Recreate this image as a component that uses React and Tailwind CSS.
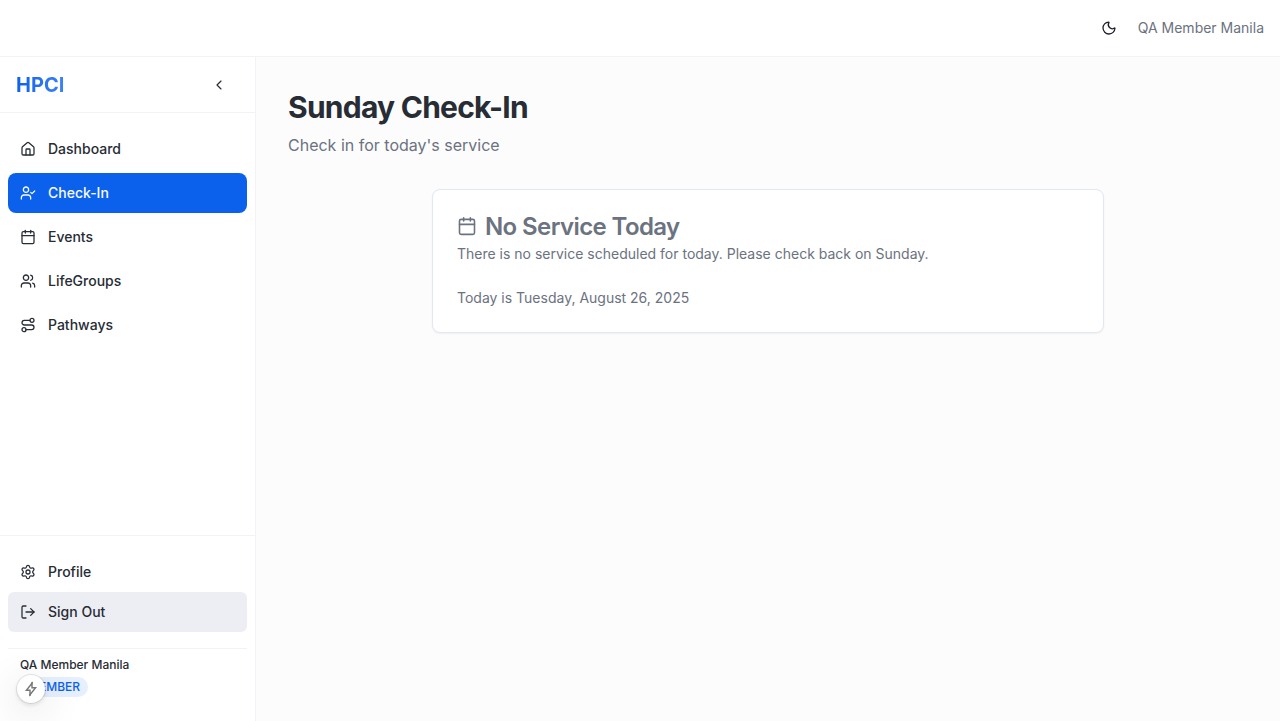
import React from "react";
import { House, UserCheck, Calendar, Users, Route, Settings, LogOut, ChevronLeft, Moon } from "lucide-react";

const navItems = [
  { label: "Dashboard", icon: House },
  { label: "Check-In", icon: UserCheck, active: true },
  { label: "Events", icon: Calendar },
  { label: "LifeGroups", icon: Users },
  { label: "Pathways", icon: Route },
];

function NavItem({ label, icon: Icon, active }) {
  return (
    <a
      className={
        "flex h-10 items-center gap-3 rounded-lg px-3 text-sm font-medium " +
        (active ? "bg-[#0b61eb] text-[#f8fafc]" : "text-[#272c35]")
      }
    >
      <Icon size={16} strokeWidth={1.9} />
      <span>{label}</span>
    </a>
  );
}

function Sidebar() {
  return (
    <aside className="flex w-64 shrink-0 flex-col border-r border-[#f1f3f7] bg-white">
      <div className="flex h-14 shrink-0 items-center justify-between border-b border-[#f1f3f7] pl-4 pr-7">
        <span className="bg-linear-to-r from-[#0b61eb] to-[#3b82f6] bg-clip-text text-xl font-bold text-transparent">
          HPCI
        </span>
        <button className="flex h-8 w-4 items-center justify-center text-[#272c35]">
          <ChevronLeft size={16} strokeWidth={1.75} />
        </button>
      </div>
      <nav className="flex flex-1 flex-col gap-1 px-2 py-4">
        {navItems.map((item) => (
          <NavItem key={item.label} {...item} />
        ))}
      </nav>
      <div className="h-[186.5px] shrink-0 border-t border-[#f1f3f7] px-2 pt-4">
        <NavItem label="Profile" icon={Settings} />
        <button className="flex h-10 w-full items-center gap-3 rounded-md bg-[#edeef3] px-3 text-sm font-medium text-[#272c35]">
          <LogOut size={16} strokeWidth={1.9} />
          <span>Sign Out</span>
        </button>
        <div className="mt-4 border-t border-[#f1f3f7] px-3 pt-2 text-xs font-medium">
          <div className="leading-4 text-[#272c35]">QA Member Manila</div>
          <div className="mt-1 flex">
            <span className="rounded-full bg-[#e6effd] px-2 py-0.5 leading-4 text-[#0b61eb]">MEMBER</span>
          </div>
        </div>
      </div>
    </aside>
  );
}

export default function App() {
  return (
    <div className="flex h-[721px] flex-col overflow-hidden bg-[#fcfcfd] font-['Inter',sans-serif] antialiased">
      <header className="flex h-[57px] shrink-0 items-center justify-end gap-[21px] border-b border-[#f1f3f7] bg-white px-4">
        <button className="text-[#1b1f27]">
          <Moon size={16} strokeWidth={1.9} />
        </button>
        <span className="text-sm text-[#6b7280]">QA Member Manila</span>
      </header>
      <div className="flex min-h-0 flex-1">
        <Sidebar />
        <main className="flex-1 px-8 pt-8">
          <h1 className="text-[30px] font-bold leading-9 tracking-[-0.75px] text-[#272c35]">Sunday Check-In</h1>
          <p className="mt-2 text-base text-[#6b7280]">Check in for today's service</p>
          <section className="mx-auto mt-8 w-[672px] rounded-lg border border-[#e2e8f0] bg-white p-6 text-sm text-[#6b7280] shadow-[0_1px_2px_rgba(0,0,0,0.05)]">
            <h2 className="flex items-center gap-2 text-2xl font-semibold leading-6 tracking-[-0.6px]">
              <Calendar size={20} strokeWidth={1.9} />
              <span className="pt-0.5 leading-[22px]">No Service Today</span>
            </h2>
            <p className="mt-1.5">There is no service scheduled for today. Please check back on Sunday.</p>
            <p className="mt-6">Today is Tuesday, August 26, 2025</p>
          </section>
        </main>
      </div>
      <div className="fixed bottom-[18px] left-[17px] flex size-7 items-center justify-center rounded-full bg-white text-[#777777] shadow-[0_0_0_1px_rgba(0,0,0,0.09),0_2px_5px_rgba(0,0,0,0.12),0_8px_40px_rgba(0,0,0,0.16)]">
        <svg width="16" height="16" viewBox="0 0 16 16" fill="none" stroke="currentColor" strokeWidth="1.4">
          <path d="M9 2.2 3.4 9.3H7v4.5l5.6-7.1H9Z" />
          <path d="M9 1v2M7 13v2" />
        </svg>
      </div>
    </div>
  );
}
